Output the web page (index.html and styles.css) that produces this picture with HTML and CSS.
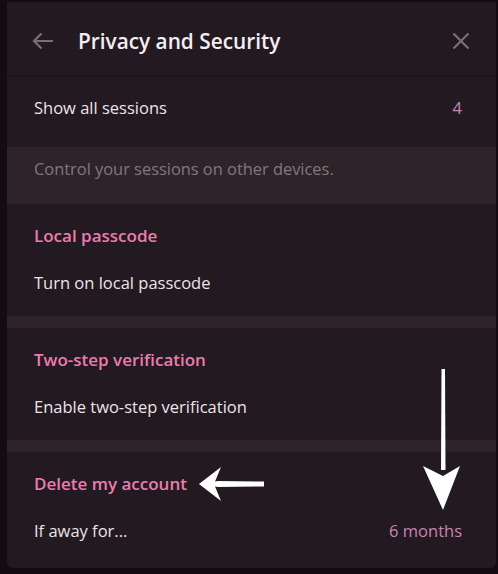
FILE: index.html
```
<!DOCTYPE html>
<html>
<head>
<meta charset="utf-8">
<link rel="stylesheet" href="styles.css">
</head>
<body>
<div class="panel">
  <div class="header">
    <svg class="back" width="22" height="18" viewBox="0 0 22 18"><path d="M21 9H2M9.5 1.5L2 9l7.5 7.5" fill="none" stroke="#7b6e75" stroke-width="2.2"/></svg>
    <div class="title">Privacy and Security</div>
    <svg class="close" width="18" height="18" viewBox="0 0 18 18"><path d="M1.5 1.5l15 15M16.5 1.5l-15 15" fill="none" stroke="#7b6e75" stroke-width="2.2"/></svg>
  </div>
  <div class="row first"><span>Show all sessions</span><span class="value">4</span></div>
  <div class="info">Control your sessions on other devices.</div>
  <div class="section">
    <div class="sub">Local passcode</div>
    <div class="row"><span>Turn on local passcode</span></div>
  </div>
  <div class="sep"></div>
  <div class="section">
    <div class="sub">Two-step verification</div>
    <div class="row"><span>Enable two-step verification</span></div>
  </div>
  <div class="sep"></div>
  <div class="section last">
    <div class="sub">Delete my account</div>
    <div class="row"><span>If away for...</span><span class="value">6 months</span></div>
  </div>
  <svg class="arrows" width="498" height="574" viewBox="0 0 498 574">
    <path d="M264 481.5L218 481L199 484L218 487L264 486.5Z" fill="#fff"/>
    <path d="M199 484L221 467L214 484L221 501Z" fill="#fff"/>
    <path d="M441.5 369L445 369L445.5 470L441 470Z" fill="#fff"/>
    <path d="M443 510L423 466L443 476L460 466Z" fill="#fff"/>
  </svg>
</div>
</body>
</html>
```
FILE: styles.css
```
html, body {
  margin: 0;
  padding: 0;
  background: #130d11;
}
body {
  width: 498px;
  height: 574px;
  overflow: hidden;
  font-family: "Open Sans", "Noto Sans", sans-serif;
  color: #ece4e8;
}
.panel {
  margin: 2px 0 0 7px;
  width: 489px;
  height: 566px;
  background: #231920;
  border-radius: 0 0 6px 6px;
  overflow: hidden;
}
.header {
  height: 75px;
  border-bottom: 1px solid #1a1217;
  display: flex;
  align-items: center;
  box-sizing: border-box;
  padding: 3px 26px 0 25px;
}
.back {
  display: block;
  margin-right: 24px;
}
.title {
  flex: 1;
  font-size: 20.8px;
  font-weight: 600;
  color: #f4eef2;
}
.close {
  display: block;
}
.row {
  display: flex;
  justify-content: space-between;
  padding: 0 34px 0 27px;
  font-size: 16.5px;
  line-height: 24px;
}
.row.first {
  height: 70px;
  box-sizing: border-box;
  padding-top: 19px;
}
.value {
  color: #c985b2;
}
.info {
  background: #2f232a;
  height: 57px;
  box-sizing: border-box;
  padding: 10px 27px 0;
  line-height: 24px;
  font-size: 16.4px;
  color: #84757d;
}
.section {
  height: 112px;
  box-sizing: border-box;
  padding-top: 20px;
}
.section.last {
  height: 116px;
}
.sub {
  padding: 0 27px;
  font-size: 17px;
  line-height: 24px;
  font-weight: 600;
  color: #ec7cae;
  margin-bottom: 23px;
}
.sep {
  height: 12px;
  background: #2f232a;
}
.arrows {
  position: absolute;
  left: 0;
  top: 0;
}
```
